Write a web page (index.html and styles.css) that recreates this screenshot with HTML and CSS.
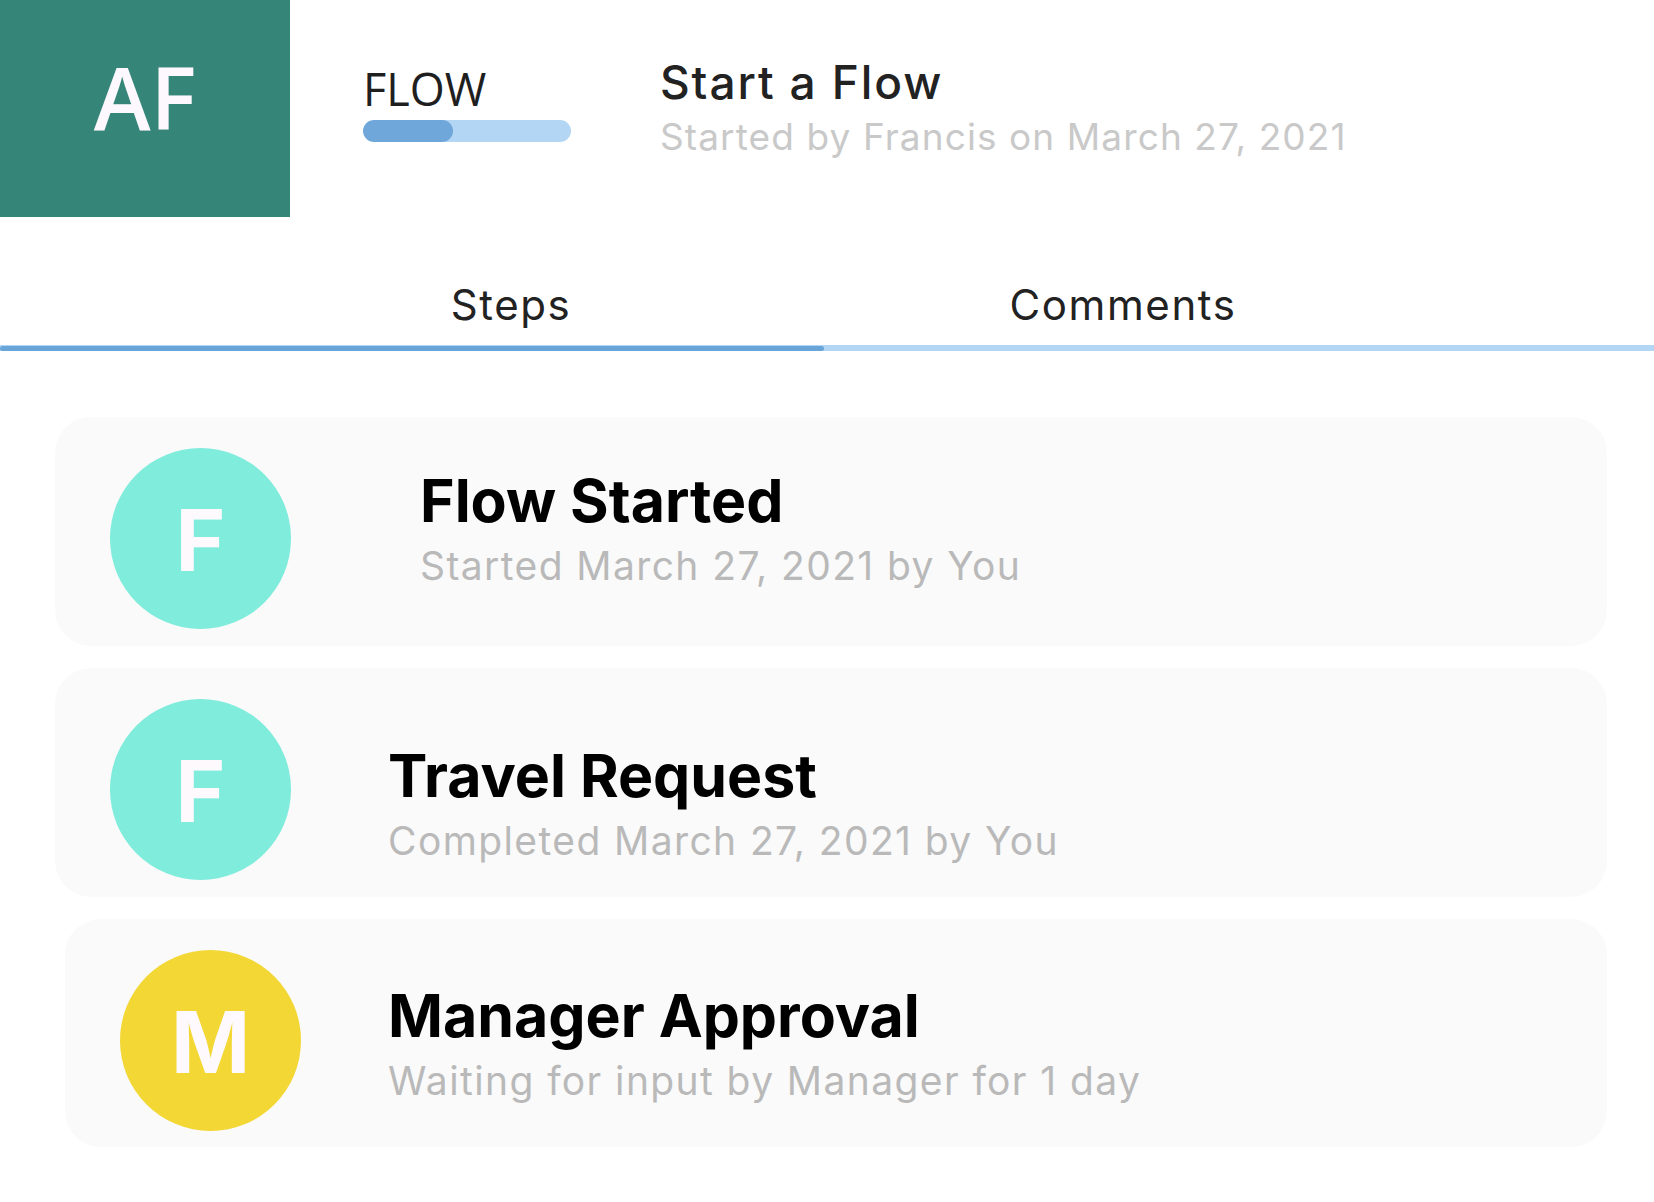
FILE: index.html
```html
<!DOCTYPE html>
<html lang="en">
<head>
<meta charset="utf-8">
<title>Start a Flow</title>
<link rel="stylesheet" href="styles.css">
</head>
<body>
<div class="page">
  <header class="top">
    <div class="logo">AF</div>
    <div class="flow">
      <div class="flow-label">FLOW</div>
      <div class="progress"><div class="progress-fill"></div></div>
    </div>
    <div class="headline">
      <div class="headline-title">Start a Flow</div>
      <div class="headline-sub">Started by Francis on March 27, 2021</div>
    </div>
  </header>

  <nav class="tabs">
    <div class="tab-row">
      <div class="tab">Steps</div>
      <div class="tab">Comments</div>
    </div>
    <div class="tab-track"><div class="tab-indicator"></div></div>
  </nav>

  <main class="steps">
    <div class="step step-started">
      <div class="avatar avatar-teal">F</div>
      <div class="step-body">
        <div class="step-title">Flow Started</div>
        <div class="step-sub">Started March 27, 2021 by You</div>
      </div>
    </div>
    <div class="step step-travel">
      <div class="avatar avatar-teal">F</div>
      <div class="step-body">
        <div class="step-title">Travel Request</div>
        <div class="step-sub">Completed March 27, 2021 by You</div>
      </div>
    </div>
    <div class="step step-manager">
      <div class="avatar avatar-yellow">M</div>
      <div class="step-body">
        <div class="step-title">Manager Approval</div>
        <div class="step-sub">Waiting for input by Manager for 1 day</div>
      </div>
    </div>
  </main>
</div>
</body>
</html>
```

FILE: styles.css
```css
* { box-sizing: border-box; }

html, body {
  margin: 0;
  padding: 0;
  background: #ffffff;
}

body {
  font-family: "Inter", "Roboto", sans-serif;
  width: 1654px;
  height: 1202px;
  overflow: hidden;
}

.top {
  display: flex;
  align-items: flex-start;
  height: 217px;
}

.logo {
  flex: 0 0 290px;
  height: 217px;
  background: #358579;
  color: #fdf8fd;
  font-family: "Open Sans", sans-serif;
  font-weight: 600;
  font-size: 86px;
  line-height: 86px;
  text-align: center;
  padding-top: 54px;
}

.flow {
  margin-left: 73px;
  width: 208px;
  padding-top: 66px;
}

.flow-label {
  font-family: "Open Sans", sans-serif;
  font-size: 45px;
  line-height: 45px;
  color: #1f1f1f;
}

.progress {
  margin-top: 9px;
  height: 22px;
  border-radius: 11px;
  background: #b3d6f5;
  overflow: hidden;
}

.progress-fill {
  width: 90px;
  height: 100%;
  border-radius: 11px;
  background: #6fa7da;
}

.headline {
  margin-left: 89px;
  padding-top: 60px;
}

.headline-title {
  font-size: 46px;
  line-height: 45px;
  font-weight: 500;
  letter-spacing: 1.9px;
  color: #222222;
}

.headline-sub {
  margin-top: 13px;
  font-size: 37px;
  line-height: 37px;
  letter-spacing: 1.1px;
  color: #c9c9c9;
}

.tabs {
  margin-top: 67px;
}

.tab-row {
  display: flex;
  padding-left: 205px;
}

.tab {
  flex: 0 0 612px;
  text-align: center;
  font-size: 42px;
  line-height: 42px;
  letter-spacing: 1.6px;
  color: #222222;
}

.tab-track {
  margin-top: 19px;
  height: 6px;
  background: #b3d6f5;
  padding-top: 1px;
}

.tab-indicator {
  width: 824px;
  height: 5px;
  border-radius: 3px;
  background: #6aa5d9;
}

.steps {
  display: flex;
  flex-direction: column;
  gap: 22px;
  margin-top: 66px;
  padding-right: 47px;
}

.step {
  display: flex;
  align-items: flex-start;
  height: 229px;
  margin-left: 55px;
  padding: 31px 0 0 55px;
  border-radius: 36px;
  background: #fafafa;
}

.step-manager {
  margin-left: 65px;
  height: 228px;
}

.avatar {
  flex: 0 0 181px;
  width: 181px;
  height: 181px;
  border-radius: 50%;
  color: #fdf9fd;
  font-weight: 700;
  font-size: 85px;
  line-height: 176px;
  padding-top: 5px;
  text-align: center;
}

.avatar-teal { background: #80ecdc; }
.avatar-yellow { background: #f3d735; }

.step-title {
  font-size: 59px;
  line-height: 59px;
  font-weight: 700;
  color: #000000;
}

.step-sub {
  margin-top: 16px;
  font-size: 39px;
  line-height: 39px;
  letter-spacing: 1.4px;
  color: #b9b9b9;
}

.step-started .step-body { margin: 23px 0 0 129px; }
.step-travel .step-body { margin: 47px 0 0 97px; }
.step-manager .step-body { margin: 36px 0 0 87px; }
```
